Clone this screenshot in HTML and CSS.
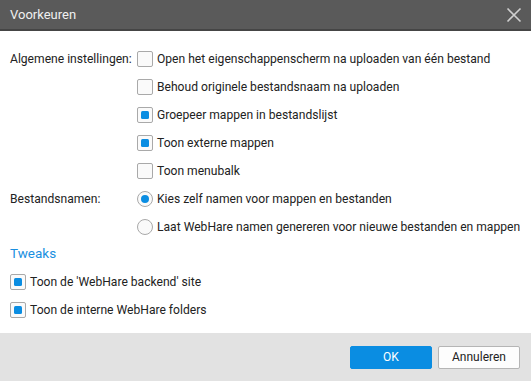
FILE: index.html
```html
<!DOCTYPE html>
<html>
<head>
<meta charset="utf-8">
<link rel="stylesheet" href="styles.css">
</head>
<body>
<div class="dialog">
  <div class="titlebar">
    <span class="title">Voorkeuren</span>
    <span class="close"><svg width="16" height="16" viewBox="0 0 16 16"><path d="M1.5 1.5 L14.5 14.5 M14.5 1.5 L1.5 14.5" stroke="#cfcfcf" stroke-width="1.6" fill="none"/></svg></span>
  </div>
  <div class="body">
    <div class="group">
      <div class="label">Algemene instellingen:</div>
      <div class="options">
        <div class="opt"><span class="cb"></span>Open het eigenschappenscherm na uploaden van één bestand</div>
        <div class="opt"><span class="cb"></span>Behoud originele bestandsnaam na uploaden</div>
        <div class="opt"><span class="cb on"></span>Groepeer mappen in bestandslijst</div>
        <div class="opt"><span class="cb on"></span>Toon externe mappen</div>
        <div class="opt"><span class="cb"></span>Toon menubalk</div>
      </div>
    </div>
    <div class="group">
      <div class="label">Bestandsnamen:</div>
      <div class="options">
        <div class="opt"><span class="rb on"></span>Kies zelf namen voor mappen en bestanden</div>
        <div class="opt"><span class="rb"></span>Laat WebHare namen genereren voor nieuwe bestanden en mappen</div>
      </div>
    </div>
    <div class="heading">Tweaks</div>
    <div class="opt"><span class="cb on"></span>Toon de 'WebHare backend' site</div>
    <div class="opt"><span class="cb on"></span>Toon de interne WebHare folders</div>
  </div>
  <div class="footer">
    <button class="btn primary">OK</button>
    <button class="btn">Annuleren</button>
  </div>
</div>
</body>
</html>
```
FILE: styles.css
```css
html, body {
  margin: 0;
  padding: 0;
}
body {
  font-family: Roboto, "Liberation Sans", sans-serif;
  font-size: 12.1px;
  color: #222;
  background: #fff;
}
.dialog {
  width: 531px;
  height: 381px;
  display: flex;
  flex-direction: column;
}
.titlebar {
  height: 29px;
  background: #5a5a5a;
  border-bottom: 2px solid #454545;
  display: flex;
  align-items: center;
  justify-content: space-between;
  padding: 0 10px;
  color: #f0f0f0;
  flex: none;
}
.title {
  font-size: 13px;
}
.close {
  display: flex;
  margin-right: -1px;
}
.body {
  flex: 1;
  padding: 14px 10px 0 10px;
}
.group {
  display: flex;
}
.label {
  width: 127px;
  flex: none;
  height: 28px;
  line-height: 28px;
  white-space: nowrap;
}
.options {
  display: flex;
  flex-direction: column;
}
.opt {
  height: 28px;
  display: flex;
  align-items: center;
  white-space: nowrap;
}
.cb {
  width: 14px;
  height: 14px;
  border: 1px solid #a9a9a9;
  border-radius: 2px;
  background: #fafafa;
  margin-right: 4px;
  display: flex;
  align-items: center;
  justify-content: center;
  flex: none;
}
.cb.on::after {
  content: "";
  width: 8px;
  height: 8px;
  border-radius: 1.5px;
  background: #0a8de2;
}
.rb {
  width: 14px;
  height: 14px;
  border: 1px solid #a9a9a9;
  border-radius: 50%;
  background: #fafafa;
  margin-right: 4px;
  display: flex;
  align-items: center;
  justify-content: center;
  flex: none;
}
.rb.on::after {
  content: "";
  width: 8px;
  height: 8px;
  border-radius: 50%;
  background: #0a8de2;
}
.heading {
  color: #1a8fdf;
  font-size: 13.5px;
  height: 27px;
  line-height: 24px;
}
.footer {
  height: 48px;
  background: #e2e2e2;
  display: flex;
  align-items: center;
  justify-content: flex-end;
  padding: 0 11px;
  gap: 6px;
  flex: none;
}
.btn {
  width: 82px;
  height: 23px;
  font-family: Roboto, "Liberation Sans", sans-serif;
  font-size: 12px;
  border: 1px solid #b5b5b5;
  background: #fdfdfd;
  color: #222;
  border-radius: 2px;
  padding: 0;
}
.btn.primary {
  background: #0a8de2;
  border-color: #0a8de2;
  color: #fff;
}
```
